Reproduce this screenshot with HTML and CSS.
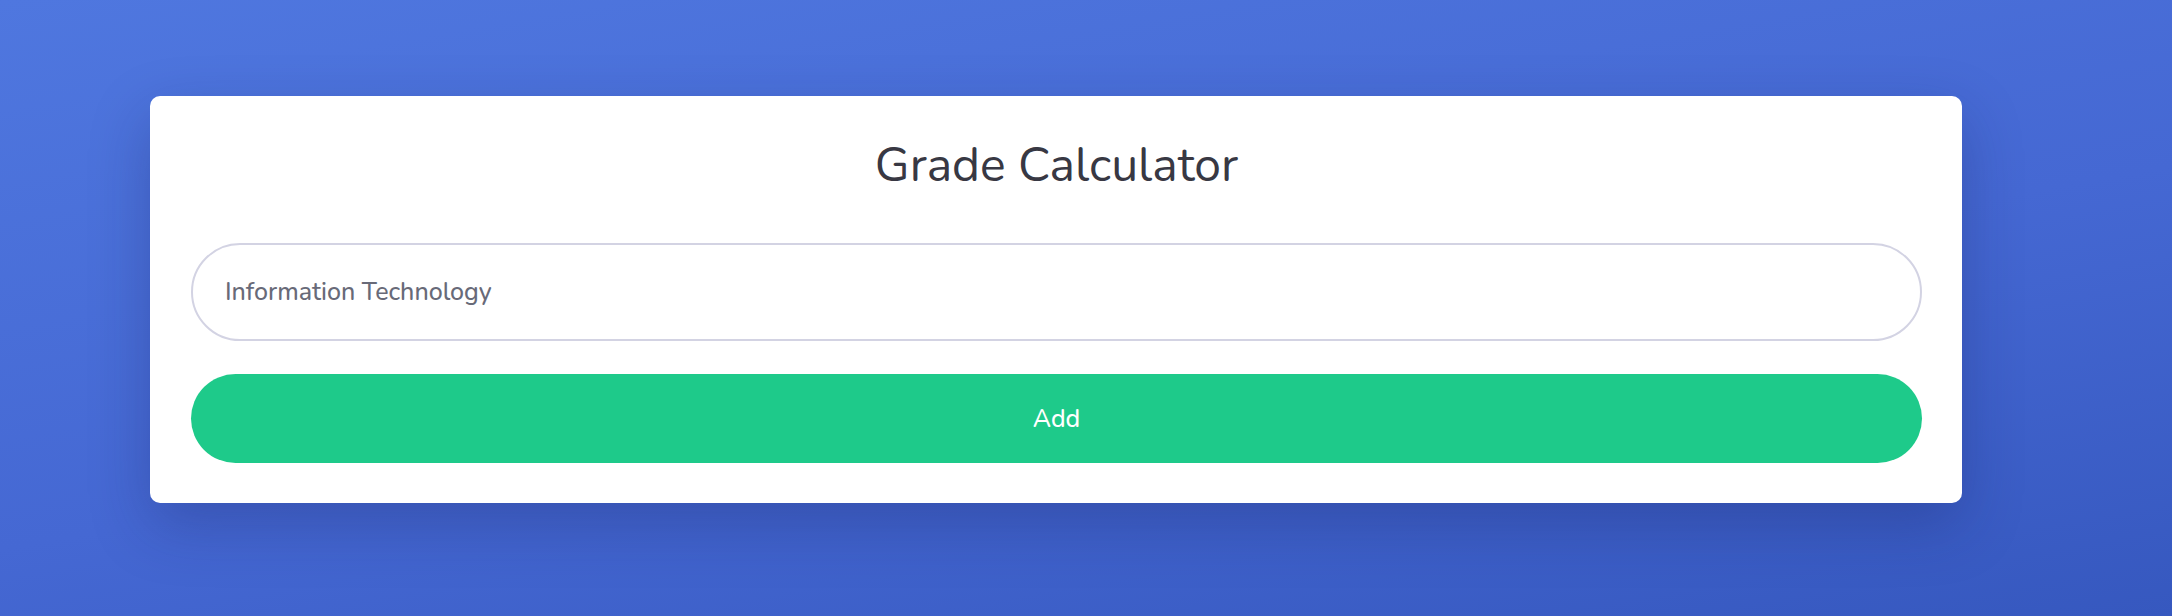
FILE: index.html
```html
<!DOCTYPE html>
<html lang="en">
<head>
<meta charset="utf-8">
<title>Grade Calculator</title>
<link rel="stylesheet" href="styles.css">
</head>
<body>
  <main class="page">
    <section class="card">
      <h1 class="title">Grade Calculator</h1>
      <form class="form">
        <input class="field" type="text" value="Information Technology">
        <button class="add" type="button">Add</button>
      </form>
    </section>
  </main>
</body>
</html>
```

FILE: styles.css
```css
* { box-sizing: border-box; }
html, body { margin: 0; padding: 0; }
body {
  width: 2172px;
  height: 616px;
  overflow: hidden;
  background: linear-gradient(170deg, #4f77df 0%, #4568d3 55%, #3658bf 100%);
  font-family: "Nunito", "Lato", "Open Sans", sans-serif;
}
.page {
  padding: 96px 0 0 150px;
}
.card {
  width: 1812px;
  background: #ffffff;
  border-radius: 10px;
  padding: 40px 40px 40px 41px;
  box-shadow: 0 22px 60px rgba(20, 30, 90, 0.28);
}
.title {
  margin: 0 0 49px;
  font-size: 48px;
  line-height: 58px;
  font-weight: 400;
  color: #383843;
  text-align: center;
}
.form {
  display: flex;
  flex-direction: column;
  gap: 33px;
}
.field {
  width: 100%;
  height: 98px;
  border: 2px solid #d3d3e3;
  border-radius: 49px;
  padding: 0 32px;
  font-family: inherit;
  font-size: 25px;
  font-weight: 500;
  color: #686a78;
  background: #fff;
  outline: none;
}
.add {
  width: 100%;
  height: 89px;
  border: none;
  border-radius: 45px;
  background: #1eca8a;
  color: #ffffff;
  font-family: inherit;
  font-size: 25px;
  font-weight: 500;
  cursor: pointer;
}
```
